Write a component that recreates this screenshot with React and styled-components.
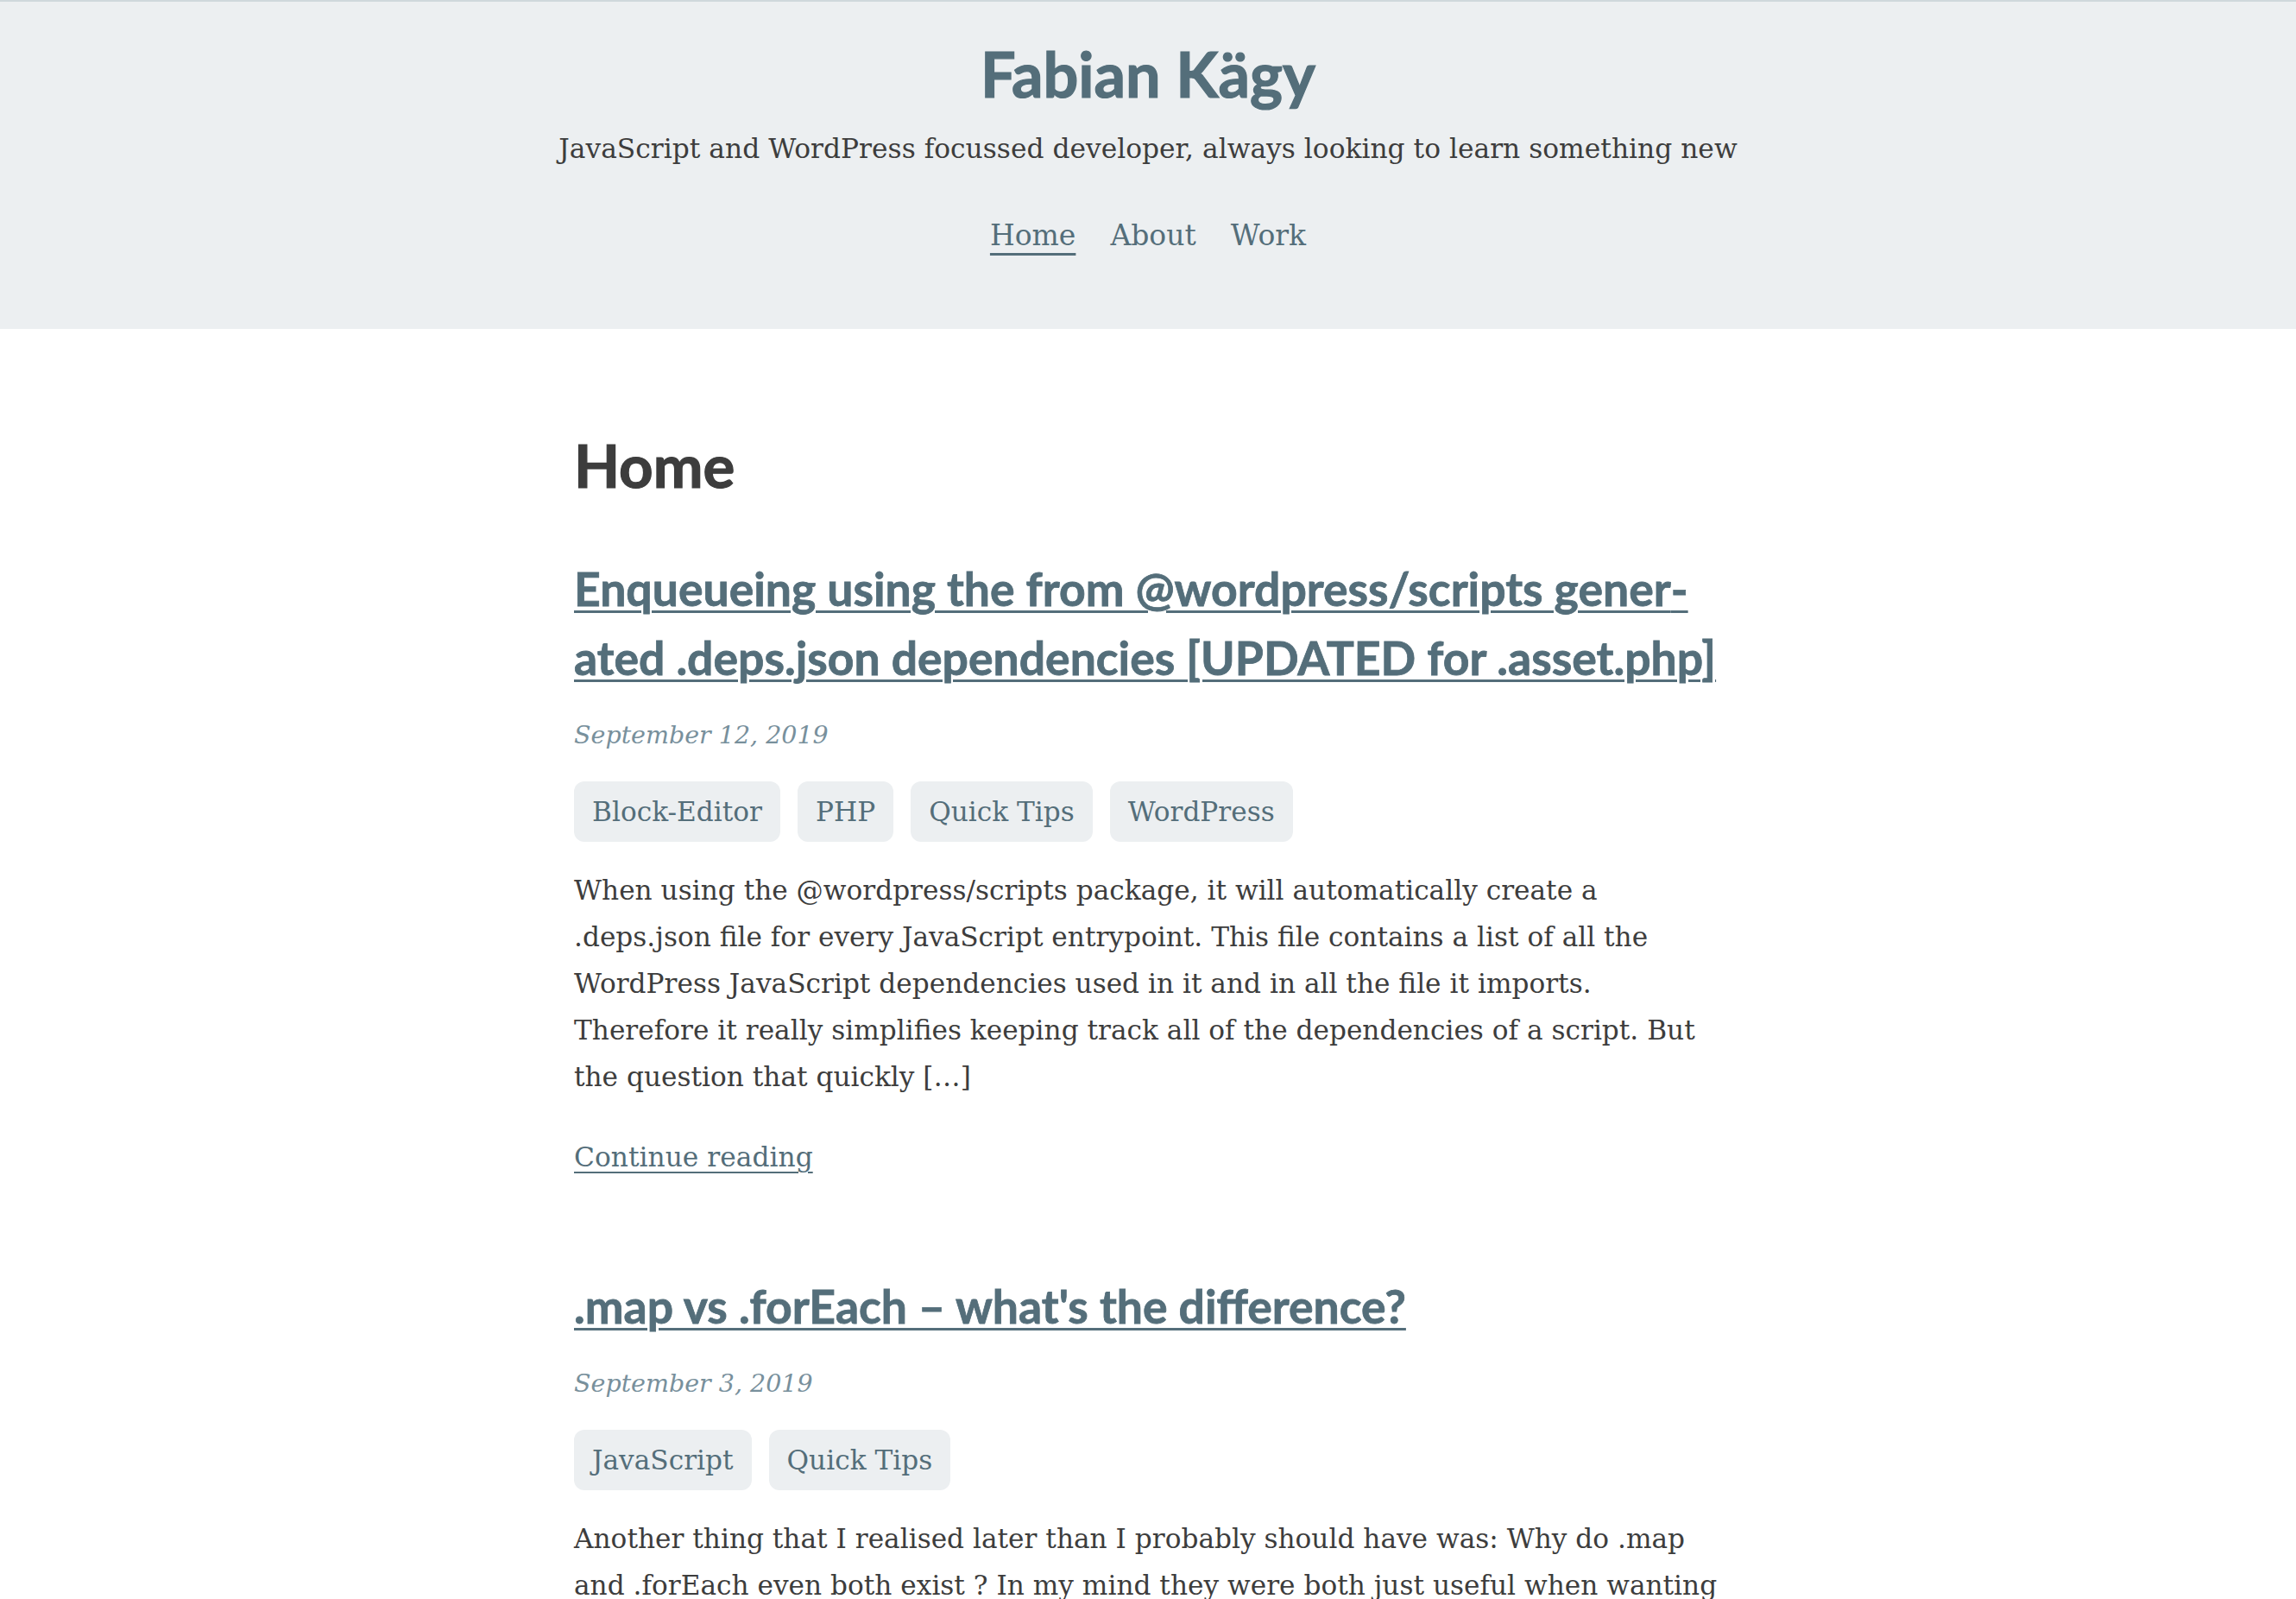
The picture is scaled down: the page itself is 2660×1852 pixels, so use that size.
import React from "react";
import styled, { createGlobalStyle } from "styled-components";

const slate = "#546e7a";
const mist = "#eceff1";

const GlobalStyles = createGlobalStyle`
  body {
    margin: 0;
    background: #fff;
    color: #3d3d3d;
    font-family: "DejaVu Serif", "Liberation Serif", serif;
  }
  a {
    color: ${slate};
  }
`;

const posts = [
  {
    id: "deps-json",
    title:
      "Enqueueing using the from @wordpress/scripts gener\u00ADated .deps.json dependencies [UPDATED for .asset.php]",
    date: "September 12, 2019",
    tags: ["Block-Editor", "PHP", "Quick Tips", "WordPress"],
    excerpt:
      "When using the @wordpress/scripts package, it will automatically create a .deps.json file for every JavaScript entrypoint. This file contains a list of all the WordPress JavaScript dependencies used in it and in all the file it imports. Therefore it really simplifies keeping track all of the dependencies of a script. But the question that quickly [\u2026]",
  },
  {
    id: "map-foreach",
    title: ".map vs .forEach \u2013 what's the difference?",
    date: "September 3, 2019",
    tags: ["JavaScript", "Quick Tips"],
    excerpt:
      "Another thing that I realised later than I probably should have was: Why do .map and .forEach even both exist ? In my mind they were both just useful when wanting to loop over an array and do something with every item in it. But there is one big difference between the two [\u2026]",
  },
];

const navItems = [
  { label: "Home", active: true },
  { label: "About" },
  { label: "Work" },
];

const App = () => {
  return (
    <>
      <GlobalStyles />
      <Header>
        <SiteTitle href="#">Fabian Kägy</SiteTitle>
        <Tagline>
          JavaScript and WordPress focussed developer, always looking to learn
          something new
        </Tagline>
        <Nav>
          {navItems.map((item) => (
            <NavLink key={item.label} href="#" $active={item.active}>
              {item.label}
            </NavLink>
          ))}
        </Nav>
      </Header>
      <Main>
        <PageTitle>Home</PageTitle>
        {posts.map((post) => (
          <Article key={post.id}>
            <PostTitle>
              <a href="#">{post.title}</a>
            </PostTitle>
            <PostDate>{post.date}</PostDate>
            <TagList>
              {post.tags.map((tag) => (
                <Tag key={tag} href="#">
                  {tag}
                </Tag>
              ))}
            </TagList>
            <Excerpt>{post.excerpt}</Excerpt>
            <ReadMore href="#">Continue reading</ReadMore>
          </Article>
        ))}
      </Main>
    </>
  );
};

const Header = styled.header`
  border-top: 2px solid #cfd8dc;
  background: ${mist};
  padding: 41px 0 81px;
  display: flex;
  flex-direction: column;
  align-items: center;
  text-align: center;
`;

const SiteTitle = styled.a`
  font-family: Lato, "Open Sans", sans-serif;
  font-weight: 700;
  font-size: 72px;
  line-height: 85px;
  -webkit-text-stroke: 1.2px ${slate};
  text-decoration: none;
  color: ${slate};
`;

const Tagline = styled.p`
  margin: 17px 0 0;
  font-size: 31.3px;
  line-height: 54px;
  color: #3d3d3d;
`;

const Nav = styled.nav`
  margin-top: 47px;
  display: flex;
  gap: 40px;
`;

const NavLink = styled.a`
  font-size: 33px;
  line-height: 54px;
  color: ${slate};
  text-decoration: ${(p) => (p.$active ? "underline" : "none")};
  text-decoration-thickness: 3px;
  text-underline-offset: 9px;
`;

const Main = styled.main`
  width: 1330px;
  margin: 0 auto;
  padding: 117px 0 80px;
`;

const PageTitle = styled.h1`
  margin: 0 0 61px;
  font-family: Lato, "Open Sans", sans-serif;
  font-weight: 700;
  font-size: 69px;
  line-height: 82px;
  -webkit-text-stroke: 1.2px #3d3d3d;
  color: #3d3d3d;
`;

const Article = styled.article`
  & + & {
    margin-top: 105px;
  }
`;

const PostTitle = styled.h2`
  margin: 0;
  font-family: Lato, "Open Sans", sans-serif;
  font-weight: 700;
  font-size: 53.5px;
  line-height: 80px;

  a {
    color: ${slate};
    -webkit-text-stroke: 0.8px ${slate};
    text-decoration-thickness: 3px;
    text-underline-offset: 5px;
  }
`;

const PostDate = styled.div`
  margin-top: 24px;
  font-style: italic;
  font-size: 28.5px;
  line-height: 54px;
  color: #78909c;
`;

const TagList = styled.div`
  margin-top: 26px;
  display: flex;
  flex-wrap: wrap;
  gap: 20px;
`;

const Tag = styled.a`
  padding: 8px 21px;
  border-radius: 12px;
  background: ${mist};
  font-size: 31.2px;
  line-height: 54px;
  text-decoration: none;
  color: ${slate};
`;

const Excerpt = styled.p`
  margin: 29px 0 0;
  font-size: 31.2px;
  line-height: 54px;
`;

const ReadMore = styled.a`
  display: inline-block;
  margin-top: 39px;
  font-size: 31.3px;
  line-height: 54px;
  text-decoration-thickness: 2px;
  text-underline-offset: 6px;
`;

export default App;
